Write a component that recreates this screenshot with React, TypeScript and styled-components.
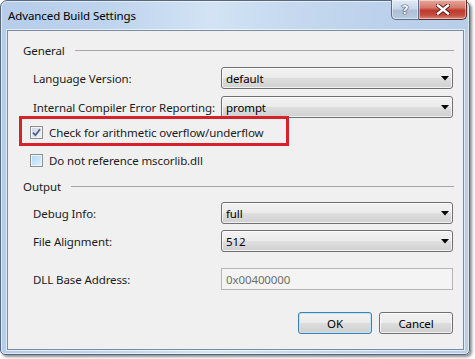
import React from 'react'
import styled, { createGlobalStyle } from 'styled-components'

const GlobalStyle = createGlobalStyle`
  html, body {
    margin: 0;
    padding: 0;
    background: #ffffff;
  }
  body {
    font-family: "Noto Sans", "Open Sans", "DejaVu Sans", sans-serif;
    font-size: 11.5px;
    letter-spacing: -0.1px;
    color: #1b1b1b;
  }
  * {
    box-sizing: border-box;
  }
`

const Page = styled.div`
  width: 475px;
  height: 359px;
  overflow: hidden;
  background: #ffffff;
`

const Window = styled.div`
  width: 470px;
  height: 355px;
  display: flex;
  flex-direction: column;
  border: 1px solid #56677e;
  border-radius: 7px 7px 5px 5px;
  background: linear-gradient(
    90deg,
    #b5cdea 0%,
    #c0d5ee 25%,
    #d3e3f5 45%,
    #c7daf0 60%,
    #bcd1eb 80%,
    #b7cee9 100%
  );
  box-shadow: inset 0 0 0 1px rgba(255, 255, 255, 0.55), 2px 2px 3px rgba(0, 0, 0, 0.45);
`

const TitleBar = styled.div`
  height: 29px;
  display: flex;
  align-items: flex-start;
  padding-left: 7px;
`

const Title = styled.div`
  line-height: 30px;
  color: #000000;
  white-space: nowrap;
`

const CaptionButtons = styled.div`
  display: flex;
  margin: -1px 2px 0 auto;
`

const CaptionButton = styled.div<{ $variant: 'help' | 'close' }>`
  height: 20px;
  width: ${({ $variant }) => ($variant === 'close' ? '48px' : '28px')};
  display: flex;
  align-items: center;
  justify-content: center;
  border: 1px solid ${({ $variant }) => ($variant === 'close' ? '#5e2a27' : '#5d6e84')};
  border-top: none;
  border-left-width: ${({ $variant }) => ($variant === 'close' ? '0' : '1px')};
  border-radius: ${({ $variant }) => ($variant === 'close' ? '0 0 5px 0' : '0 0 0 5px')};
  background: ${({ $variant }) =>
    $variant === 'close'
      ? 'linear-gradient(180deg, #e6a99e 0%, #d4786a 40%, #c0392c 55%, #c44d3f 80%, #d88a7c 100%)'
      : 'linear-gradient(180deg, #e1eaf5 0%, #c8d7ea 45%, #aebfd6 55%, #b9cbe0 100%)'};
  box-shadow: inset 0 0 0 1px rgba(255, 255, 255, 0.45);
`

const HelpGlyph = styled.span`
  font-family: "DejaVu Sans", sans-serif;
  font-weight: bold;
  font-size: 13px;
  line-height: 1;
  color: #f4f7fb;
  text-shadow: 0 0 1px #2f3b4c, 0 0 1px #2f3b4c, 0 0 1px #2f3b4c;
`

const Client = styled.div`
  flex: 1;
  margin: 0 5px 4px 6px;
  display: flex;
  flex-direction: column;
  padding: 11px 10px 0 15px;
  border: 1px solid #7b8ca2;
  background: #f0f0f0;
  box-shadow: 0 0 0 1px rgba(255, 255, 255, 0.6);
`

const GroupHeader = styled.div<{ $mt?: number }>`
  height: 16px;
  margin-top: ${({ $mt = 0 }) => $mt}px;
  display: flex;
  align-items: center;
  gap: 10px;
  white-space: nowrap;

  &::after {
    content: '';
    flex: 1;
    height: 1px;
    margin-right: -1px;
    background: #a5a5a5;
  }
`

const FieldRow = styled.div<{ $mt: number }>`
  height: 22px;
  margin-top: ${({ $mt }) => $mt}px;
  padding-left: 10px;
  display: grid;
  grid-template-columns: 188px 1fr;
  align-items: center;
  white-space: nowrap;
`

const Combo = styled.div`
  height: 22px;
  display: flex;
  align-items: center;
  padding: 0 3px 0 4px;
  border: 1px solid #707070;
  border-radius: 3px;
  color: #000000;
  background: linear-gradient(180deg, #f3f3f3 0%, #ebebeb 48%, #dedede 52%, #d0d0d0 100%);
  box-shadow: inset 0 0 0 1px rgba(255, 255, 255, 0.7);
`

const ComboArrow = styled.svg`
  margin-left: auto;
`

const TextBox = styled.div`
  height: 22px;
  display: flex;
  align-items: center;
  padding-left: 4px;
  border: 1px solid #b5b5b5;
  background: #f4f4f4;
  color: #6d6d6d;
`

const HighlightBox = styled.div`
  width: 270px;
  height: 30px;
  margin: -2px 0 0 -4px;
  padding: 3px 0 0 8px;
  border: 3px solid #d6222a;
  display: flex;
  align-items: center;
  gap: 6px;
  white-space: nowrap;
`

const CheckRow = styled.div<{ $mt: number }>`
  height: 16px;
  margin-top: ${({ $mt }) => $mt}px;
  padding-left: 7px;
  display: flex;
  align-items: center;
  gap: 6px;
  white-space: nowrap;
`

const CheckBox = styled.span<{ $checked?: boolean }>`
  width: 13px;
  height: 13px;
  flex: none;
  display: flex;
  align-items: center;
  justify-content: center;
  border: 1px solid #8e8f8f;
  background: ${({ $checked }) =>
    $checked
      ? 'linear-gradient(135deg, #cfd3de 0%, #e4e7ef 60%, #f2f3f7 100%)'
      : 'linear-gradient(135deg, #aed7f1 0%, #c9e6f8 55%, #e2f3fc 100%)'};
  box-shadow: inset 0 0 0 1px ${({ $checked }) => ($checked ? '#f4f5f8' : '#eaf6fd')};
`

const ButtonRow = styled.div`
  margin-top: 22px;
  display: flex;
  justify-content: flex-end;
  gap: 7px;
`

const DialogButton = styled.div<{ $default?: boolean }>`
  width: 74px;
  height: 22px;
  display: flex;
  align-items: center;
  justify-content: center;
  border: 1px solid ${({ $default }) => ($default ? '#3c7fb1' : '#707070')};
  border-radius: 3px;
  color: #000000;
  background: linear-gradient(180deg, #f2f2f2 0%, #ebebeb 48%, #dddddd 52%, #cfcfcf 100%);
  box-shadow: inset 0 0 0 1px ${({ $default }) => ($default ? '#bfe3f7' : 'rgba(255,255,255,0.75)')};
`

const Arrow = () => (
  <ComboArrow width="8" height="5" viewBox="0 0 8 5">
    <path d="M0 0 H8 L4 4.5 Z" fill="#000" />
  </ComboArrow>
)

const CloseGlyph = () => (
  <svg width="14" height="11" viewBox="0 0 14 11">
    <path d="M2 1.5 L12 9.5 M12 1.5 L2 9.5" stroke="#4a1d1a" strokeWidth="4.2" strokeLinecap="square" />
    <path d="M2 1.5 L12 9.5 M12 1.5 L2 9.5" stroke="#ffffff" strokeWidth="2.4" strokeLinecap="square" />
  </svg>
)

const CheckMark = () => (
  <svg width="9" height="9" viewBox="0 0 9 9">
    <path d="M1 4.6 L3.4 7.2 L8 1.2" stroke="#4c5f8d" strokeWidth="1.8" fill="none" />
  </svg>
)

const App: React.FC = () => {
  return (
    <Page>
      <GlobalStyle />
      <Window>
        <TitleBar>
          <Title>Advanced Build Settings</Title>
          <CaptionButtons>
            <CaptionButton $variant="help">
              <HelpGlyph>?</HelpGlyph>
            </CaptionButton>
            <CaptionButton $variant="close">
              <CloseGlyph />
            </CaptionButton>
          </CaptionButtons>
        </TitleBar>
        <Client>
          <GroupHeader>General</GroupHeader>
          <FieldRow $mt={9}>
            <span>Language Version:</span>
            <Combo>
              default
              <Arrow />
            </Combo>
          </FieldRow>
          <FieldRow $mt={7}>
            <span>Internal Compiler Error Reporting:</span>
            <Combo>
              prompt
              <Arrow />
            </Combo>
          </FieldRow>
          <HighlightBox>
            <CheckBox $checked>
              <CheckMark />
            </CheckBox>
            <span>Check for arithmetic overflow/underflow</span>
          </HighlightBox>
          <CheckRow $mt={6}>
            <CheckBox />
            <span>Do not reference mscorlib.dll</span>
          </CheckRow>
          <GroupHeader $mt={10}>Output</GroupHeader>
          <FieldRow $mt={8}>
            <span>Debug Info:</span>
            <Combo>
              full
              <Arrow />
            </Combo>
          </FieldRow>
          <FieldRow $mt={6}>
            <span>File Alignment:</span>
            <Combo>
              512
              <Arrow />
            </Combo>
          </FieldRow>
          <FieldRow $mt={16}>
            <span>DLL Base Address:</span>
            <TextBox>0x00400000</TextBox>
          </FieldRow>
          <ButtonRow>
            <DialogButton $default>OK</DialogButton>
            <DialogButton>Cancel</DialogButton>
          </ButtonRow>
        </Client>
      </Window>
    </Page>
  )
}

export default App
